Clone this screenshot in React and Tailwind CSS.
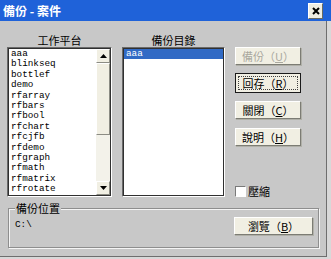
import clsx from "clsx";

const workspaces = [
  "aaa", "blinkseq", "bottlef", "demo", "rfarray", "rfbars", "rfbool",
  "rfchart", "rfcjfb", "rfdemo", "rfgraph", "rfmath", "rfmatrix", "rfrotate",
];

function Btn({ label, hot, focused, disabled, className }) {
  return (
    <div
      className={clsx(
        "flex h-[18px] items-center justify-center bg-[#f1efe3] text-[11px] leading-none",
        focused
          ? "border border-[#1a1a1a] p-[2px]"
          : "border border-t-white border-l-white border-b-[#7c7c74] border-r-[#7c7c74] shadow-[1px_1px_0_#b0b0a8]",
        disabled ? "text-[#a9a89e]" : "text-black",
        className
      )}
    >
      <div
        className={clsx(
          "flex h-full w-full items-center justify-center",
          focused && "border border-dotted border-[#404040]"
        )}
      >
        {label}（<span className="underline">{hot}</span>）
      </div>
    </div>
  );
}

function ScrollArrow({ up }) {
  return (
    <div className="flex h-[14px] items-center justify-center border border-t-white border-l-white border-b-[#8c8c84] border-r-[#8c8c84] bg-[#f1efe3]">
      <svg width="7" height="4" viewBox="0 0 7 4">
        <polygon points={up ? "0,4 7,4 3.5,0" : "0,0 7,0 3.5,4"} fill="#000" />
      </svg>
    </div>
  );
}

export default function App() {
  return (
    <div className="h-[259px] w-[331px] bg-[#d8d8d8] font-['Noto_Sans_CJK_TC','Noto_Sans_CJK_SC',sans-serif]">
      <div className="flex h-[257px] w-[327px] flex-col border-r border-b border-[#6e6e6e] bg-[#c8c8c8]">
        {/* title bar */}
        <div className="flex h-[21px] w-[331px] shrink-0 items-center justify-between bg-[#1f62d9] pl-[3px] pr-[8px]">
          <span className="text-[12px] font-bold leading-none text-white">備份 - 案件</span>
          <div className="flex h-[16px] w-[15px] items-center justify-center border border-t-white border-l-white border-b-[#6a6a60] border-r-[#6a6a60] bg-[#efede2]">
            <svg width="8" height="8" viewBox="0 0 8 8">
              <path d="M1 1 L7 7 M7 1 L1 7" stroke="#000" strokeWidth="2" />
            </svg>
          </div>
        </div>

        <div className="flex flex-1 flex-col pl-[7px] pt-[12px]">
          <div className="flex h-[164px]">
            {/* workspace list */}
            <div className="flex w-[105px] flex-col">
              <div className="h-[14px] text-center text-[11px] leading-[14px] text-black">工作平台</div>
              <div className="flex h-[150px] border border-t-[#6a6a6a] border-l-[#6a6a6a] border-b-white border-r-white">
                <div className="flex flex-1 border border-[#303030] bg-white">
                  <div className="flex-1 overflow-hidden pl-[2px] font-['Liberation_Mono',monospace] text-[9.3px] leading-[10.4px] text-black">
                    {workspaces.map((w) => (
                      <div key={w}>{w}</div>
                    ))}
                  </div>
                  <div className="flex w-[14px] flex-col bg-[#f3f2ea]">
                    <ScrollArrow up />
                    <div className="h-[72px] border border-t-white border-l-white border-b-[#8c8c84] border-r-[#8c8c84] bg-[#f1efe3]" />
                    <div className="flex-1" />
                    <ScrollArrow />
                  </div>
                </div>
              </div>
            </div>

            {/* backup folder list */}
            <div className="ml-[10px] flex w-[103px] flex-col">
              <div className="h-[14px] text-center text-[11px] leading-[14px] text-black">備份目錄</div>
              <div className="flex h-[150px] border border-t-[#6a6a6a] border-l-[#6a6a6a] border-b-white border-r-white">
                <div className="flex-1 border border-[#303030] bg-white">
                  <div className="bg-[#316ac5] pl-[2px] font-['Liberation_Mono',monospace] text-[9.3px] leading-[10.4px] text-white">
                    aaa
                  </div>
                </div>
              </div>
            </div>

            {/* buttons */}
            <div className="ml-[10px] flex w-[66px] flex-col pt-[14px]">
              <Btn label="備份" hot="U" disabled />
              <Btn label="回存" hot="R" focused className="mt-[8px] h-[20px]" />
              <Btn label="關閉" hot="C" className="mt-[8px]" />
              <Btn label="說明" hot="H" className="mt-[9px]" />
              <div className="mt-auto flex items-center gap-[2px]">
                <div className="h-[11px] w-[11px] border border-t-[#7a7a7a] border-l-[#7a7a7a] border-b-white border-r-white bg-white" />
                <span className="text-[11px] leading-none text-black">壓縮</span>
              </div>
            </div>
          </div>

          {/* backup location group */}
          <div className="relative ml-px mt-[11px] flex h-[40px] w-[311px] items-start justify-between border border-[#8e8e8e] pl-[6px] pr-[5px] pt-[8px] shadow-[1px_1px_0_#f4f4f4,inset_1px_1px_0_#f4f4f4]">
            <span className="absolute -top-[7px] left-[6px] bg-[#c8c8c8] px-px text-[11px] leading-[13px] text-black">備份位置</span>
            <span className="mt-[3px] font-['Liberation_Mono',monospace] text-[9.3px] leading-[10px] text-black">C:\</span>
            <Btn label="瀏覽" hot="B" className="w-[79px]" />
          </div>
        </div>
      </div>
    </div>
  );
}
